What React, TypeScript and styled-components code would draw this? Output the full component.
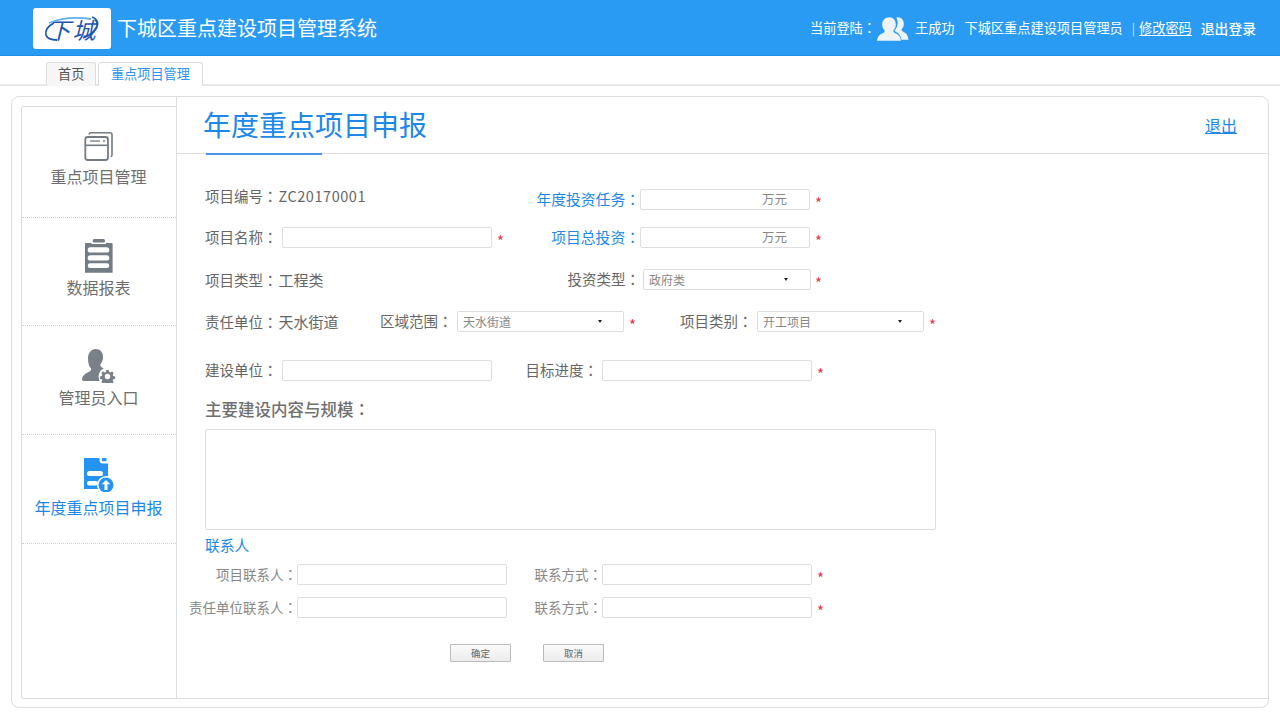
import React from 'react';
import styled, { createGlobalStyle } from 'styled-components';

const Global = createGlobalStyle`
  html, body { margin: 0; padding: 0; background: #fff; }
  body { font-family: "Noto Sans CJK SC", "Liberation Sans", sans-serif; color: #666; overflow: hidden; }
  * { box-sizing: border-box; }
`;

const Page = styled.div`width: 1280px; height: 720px; display: flex; flex-direction: column;`;

const Header = styled.header`
  height: 56px; background: #2a9bf3; border-bottom: 1px solid #1f8fe6;
  display: flex; align-items: center; padding: 0 24px 0 33px; color: #fff; flex: none;
`;
const LogoBox = styled.div`
  position: relative; width: 78px; height: 41px; background: #fff; border-radius: 3px;
  display: flex; align-items: center; justify-content: center; margin-right: 6px; margin-top: 2px; padding: 2px 0 0 1px;
`;
const LogoText = styled.span`
  font-size: 23px; font-style: italic; font-weight: 400; color: #1a56b0; line-height: 1; letter-spacing: 2px;
`;
const LogoSwoosh = styled.svg`position: absolute; left: 0; top: 0;`;
const SystemTitle = styled.h1`margin: 0; font-size: 20px; font-weight: 400; line-height: 28px;`;
const UserBar = styled.div`margin-left: auto; display: flex; align-items: center; font-size: 13.2px; height: 28px;`;
const UserText = styled.span<{ $ml?: number }>`margin-left: ${p => p.$ml ?? 0}px; white-space: nowrap;`;
const UserGlyph = styled.svg`display: block; margin: 1px 0 0 1px; flex: none;`;
const UserLink = styled.a`margin-left: 4px; color: #fff; text-decoration: underline; text-underline-offset: 2px;`;
const Logout = styled.a`margin-left: 9px; color: #fff; font-size: 13.8px; font-weight: 500;`;
const Sep = styled.span`margin-left: 9px; opacity: .8; font-size: 12px;`;
const Colon = styled.span`font-family: "Noto Sans CJK TC", sans-serif;`;

const TabBar = styled.nav`
  height: 30px; flex: none; border-bottom: 2px solid #e9e9e9; padding: 6px 0 0 46px;
  display: flex; align-items: flex-start; gap: 2px;
`;
const Tab = styled.div<{ $active?: boolean }>`
  height: 24px; padding: 0 ${p => (p.$active ? 11.5 : 11)}px; font-size: 13.2px; line-height: 22px;
  border: 1px solid #ddd; border-bottom: 0; border-radius: 3px 3px 0 0; position: relative; z-index: 1;
  color: ${p => (p.$active ? '#2a95ee' : '#555')};
  background: ${p => (p.$active ? '#fff' : '#f6f6f6')};
`;

const Panel = styled.main`
  margin: 10px 0 0 11px; width: 1258px; height: 612px; flex: none;
  border: 1px solid #dedede; border-radius: 8px; padding: 9px 0 8px 9px; display: flex;
`;
const Sidebar = styled.aside`
  width: 156px; flex: none; border: 1px solid #dcdcdc; border-radius: 2px; margin-right: -1px;
`;
const MenuItem = styled.div<{ $h: number; $pt: number; $gap: number; $active?: boolean }>`
  height: ${p => p.$h}px; padding: ${p => p.$pt}px 1px 0 0; border-bottom: 1px dotted #d2d2d2;
  display: flex; flex-direction: column; align-items: center; gap: ${p => p.$gap}px;
  font-size: 16px; line-height: 24px; color: ${p => (p.$active ? '#1c88e8' : '#6e6e6e')};
`;
const MenuIcon = styled.svg`width: 50px; height: 34px; display: block; flex: none; margin-right: -1px;`;

const Content = styled.section`flex: 1; min-width: 0; margin-top: -9px; border-bottom: 1px solid #ddd; border-left: 1px solid #ddd; display: flex; flex-direction: column;`;
const TitleBar = styled.div`
  position: relative; height: 57px; flex: none; border-bottom: 1px solid #ddd;
  display: flex; align-items: center; justify-content: space-between; padding: 0 31px 3px 26px;
  &::after { content: ''; position: absolute; left: 29px; bottom: -2px; width: 116px; height: 2px; background: #4a94f0; }
`;
const PageTitle = styled.h2`margin: 0; font-size: 28px; font-weight: 400; color: #1c88e8; line-height: 40px;`;
const Exit = styled.a`font-size: 16px; color: #1c88e8; text-decoration: underline; margin-top: 3px;`;

const Form = styled.form`padding: 26px 0 0 28px;`;
const Row = styled.div<{ $h: number }>`height: ${p => p.$h}px; display: flex; align-items: center; font-size: 14.5px; color: #666;`;
const Label = styled.label<{ $w?: number; $blue?: boolean; $right?: boolean; $small?: boolean; $pr?: number }>`
  flex: none; white-space: nowrap; width: ${p => (p.$w ? `${p.$w}px` : 'auto')};
  text-align: ${p => (p.$right ? 'right' : 'left')}; padding-right: ${p => p.$pr ?? 0}px; margin-top: -2px;
  color: ${p => (p.$blue ? '#1c88e8' : p.$small ? '#888' : '#666')};
  font-size: ${p => (p.$blue ? 14.8 : p.$small ? 13.5 : 14.5)}px;
`;
const Static = styled.div<{ $w: number; $up?: number }>`flex: none; width: ${p => p.$w}px; white-space: nowrap; margin-top: ${p => -(p.$up ?? 0)}px;`;
const Value = styled.span`font-size: 15px; margin-left: 1px;`;
const Code = styled.span`letter-spacing: .55px; margin-left: 1px;`;
const TextInput = styled.input<{ $w: number; $ml?: number }>`
  flex: none; width: ${p => p.$w}px; height: 21px; margin-left: ${p => p.$ml ?? 0}px; padding: 0 5px;
  border: 1px solid #ddd; border-radius: 2px; background: #fff; outline: 0;
`;
const MoneyBox = styled.div`
  flex: none; width: 170px; height: 21px; border: 1px solid #ddd; border-radius: 2px; background: #fff;
  display: flex; align-items: center; justify-content: flex-end; padding: 0 22px 2px 0; font-size: 12.5px; color: #888;
`;
const SelectBox = styled.div<{ $ml?: number; $w?: number }>`
  flex: none; width: ${p => p.$w ?? 168}px; height: 21px; margin-left: ${p => p.$ml ?? 0}px;
  padding: 0 ${p => (p.$w ?? 168) - 146}px 0 5px;
  border: 1px solid #ddd; border-radius: 2px; background: #fff; font-size: 12px; color: #888;
  display: flex; align-items: center; justify-content: space-between;
  &::after { content: ''; width: 0; height: 0; border: 2px solid transparent; border-top: 3px solid #222; border-bottom: 0; }
`;
const Star = styled.span<{ $ml?: number; $w?: number }>`
  flex: none; color: #f0324b; font-size: 15px; margin: 6px 0 0 ${p => p.$ml ?? 5}px; width: ${p => (p.$w ? `${p.$w}px` : 'auto')};
`;
const SectionTitle = styled.h3`margin: 0 0 12px; font-size: 16.5px; font-weight: 500; color: #707070; line-height: 16px;`;
const Area = styled.textarea`display: block; width: 731px; height: 101px; border: 1px solid #ddd; border-radius: 2px; background: #fff; resize: none; outline: 0;`;
const ContactTitle = styled.div`margin-top: 3px; height: 25px; font-size: 14.8px; line-height: 23px; color: #1c88e8;`;
const ContactRows = styled.div`margin-left: -16px;`;
const Buttons = styled.div`display: flex; gap: 32px; margin: 20px 0 0 245px;`;
const Btn = styled.button`
  width: 61px; height: 18px; padding: 0; border: 1px solid #bbb; border-radius: 1px;
  background: linear-gradient(#fafafa, #ececec); font: 9.5px "Noto Sans CJK SC", sans-serif; color: #666;
`;

const C = () => <Colon>：</Colon>;

const WindowIcon = () => (
  <MenuIcon viewBox="0 0 50 34" fill="none" stroke="#737b84">
    <rect x="11.300" y="7" width="22.700" height="23" rx="2.500" strokeWidth="1.800" />
    <path d="M11.300 15.300h22.700" strokeWidth="1.600" />
    <path d="M16 11h10" strokeWidth="1.300" />
    <circle cx="30" cy="11" r="1" fill="#737b84" stroke="none" />
    <path d="M15 4.500c.2-1 1-1.700 2-1.700h19c1.200 0 2 .8 2 2v20c0 1-.5 1.600-1.300 1.900" strokeWidth="1.600" />
  </MenuIcon>
);
const ClipIcon = () => (
  <MenuIcon viewBox="0 0 50 34" fill="#737b84">
    <rect x="18.700" y="0" width="12.300" height="3.500" rx="1.500" />
    <path d="M12 4h5.500v1h14.500V4h5.600c.5 0 1 .5 1 1v28.700H11V5c0-.5.5-1 1-1z" />
    <g fill="#fff">
      <rect x="13.700" y="8.300" width="21.600" height="5.300" rx="2.600" />
      <rect x="13.700" y="16.300" width="21.600" height="5.300" rx="2.600" />
      <rect x="13.700" y="24.300" width="21.600" height="4.800" rx="2.400" />
    </g>
  </MenuIcon>
);
const AdminIcon = () => (
  <MenuIcon viewBox="0 0 50 34" fill="#7a8087">
    <path d="M21.500 0c5 0 7.500 3.500 7.500 8 0 3-1 5.500-2.500 7.200-.5 1 0 2.500 1.500 3.300l2 1c-3 1.500-4.500 5-4 9.500 0 1 .3 2 .7 3H9.500c-1 0-1.800-1-1.500-2.200 .6-3.300 3-5 7-7 1.500-.8 2.500-2 2-3.600C15 17.500 14 14.500 14 9c0-5 3.500-9 7.500-9z" />
    <circle cx="33.500" cy="27.500" r="9" fill="#fff" />
    <g transform="translate(33.500 27.500)">
      <path d="M-1.200-6.500h2.400l.4 1.800 1.300.6 1.600-1 1.700 1.700-1 1.600.6 1.300 1.800.4v2.400l-1.800.4-.6 1.300 1 1.600-1.700 1.700-1.600-1-1.300.6-.4 1.800h-2.400l-.4-1.800-1.300-.6-1.600 1-1.700-1.700 1-1.600-.6-1.300-1.800-.4v-2.400l1.800-.4.6-1.300-1-1.600 1.700-1.700 1.600 1 1.300-.6z" />
      <circle r="2.700" fill="#fff" />
    </g>
  </MenuIcon>
);
const ReportIcon = () => (
  <MenuIcon viewBox="0 0 50 34" fill="#2593f2">
    <path d="M10 0h15.500v2c0 2 1 3.500 3 3.500H34V31H10z" />
    <rect x="28" y="0" width="4.500" height="3.200" rx=".6" />
    <g fill="#fff">
      <rect x="13" y="13" width="16" height="5" rx="2.500" />
      <rect x="13" y="23" width="11" height="4.500" rx="2.200" />
    </g>
    <circle cx="32" cy="27" r="9" fill="#fff" />
    <circle cx="32" cy="27" r="7.500" />
    <path d="M32 22l4.300 4.300h-2.800V32h-3v-5.700h-2.800z" fill="#fff" />
  </MenuIcon>
);
const UsersIcon = () => (
  <UserGlyph width="32" height="25" viewBox="0 0 34 26" fill="#eef3f6">
    <path d="M22 1c4 0 6.500 3 6.500 7 0 2.500-1 4.500-2.500 6 0 1 .5 1.800 2 2.500 3 1.300 5 4 5.500 8.500H26c-.5-4.500-3-7-6-8.500-1-.5-1.500-1.200-1-2 2-2 3-4.500 3-7.500 0-2-.5-4-1.500-5.500.5-.3 1-.5 1.500-.5z" />
    <path d="M13 1c4 0 7 3 7 7.500 0 2.800-1 5-2.500 6.300-.5 1.500.5 2.500 2 3.200 3.500 1.500 5.500 3.500 6 8H0c.5-4.500 2.500-6.500 6-8 1.500-.7 2.500-1.700 2-3.200C6.500 13.500 5.500 11.300 5.500 8.500 5.500 4 9 1 13 1z" />
  </UserGlyph>
);

export default function App() {
  return (
    <Page>
      <Global />
      <Header>
        <LogoBox>
          <LogoSwoosh width="78" height="41" viewBox="0 0 78 41" fill="none">
            <path d="M21 15c-6 3-9 7-8 12 1 3 5 5 11 5" stroke="#1b55a8" strokeWidth="1.800" />
            <path d="M16 15c12-5 28-6 42-4" stroke="#5fb0ec" strokeWidth="1.800" />
            <path d="M59 9c6 2 7 8 3 13-3 4-7 6-12 8" stroke="#1b55a8" strokeWidth="1.800" />
          </LogoSwoosh>
          <LogoText>下城</LogoText>
        </LogoBox>
        <SystemTitle>下城区重点建设项目管理系统</SystemTitle>
        <UserBar>
          <UserText>当前登陆<C /></UserText>
          <UsersIcon />
          <UserText $ml={6}>王成功</UserText>
          <UserText $ml={10}>下城区重点建设项目管理员</UserText>
          <Sep>|</Sep>
          <UserLink>修改密码</UserLink>
          <Logout>退出登录</Logout>
        </UserBar>
      </Header>
      <TabBar>
        <Tab>首页</Tab>
        <Tab $active>重点项目管理</Tab>
      </TabBar>
      <Panel>
        <Sidebar>
          <MenuItem $h={111} $pt={23} $gap={0}><WindowIcon />重点项目管理</MenuItem>
          <MenuItem $h={108} $pt={21} $gap={2}><ClipIcon />数据报表</MenuItem>
          <MenuItem $h={109} $pt={23} $gap={2}><AdminIcon />管理员入口</MenuItem>
          <MenuItem $h={109} $pt={23} $gap={3} $active><ReportIcon />年度重点项目申报</MenuItem>
        </Sidebar>
        <Content>
          <TitleBar>
            <PageTitle>年度重点项目申报</PageTitle>
            <Exit>退出</Exit>
          </TitleBar>
          <Form>
            <Row $h={38}>
              <Static $w={331} $up={8}>项目编号<C /><Code>ZC20170001</Code></Static>
              <Label $w={104} $blue $right>年度投资任务<C /></Label>
              <MoneyBox>万元</MoneyBox>
              <Star>*</Star>
            </Row>
            <Row $h={38}>
              <Label $w={77}>项目名称<C /></Label>
              <TextInput $w={210} />
              <Star $w={11}>*</Star>
              <Label $w={132} $blue $right>项目总投资<C /></Label>
              <MoneyBox>万元</MoneyBox>
              <Star>*</Star>
            </Row>
            <Row $h={47}>
              <Static $w={332}>项目类型<C /><Value>工程类</Value></Static>
              <Label $w={103} $right>投资类型<C /></Label>
              <SelectBox $ml={3}>政府类</SelectBox>
              <Star $ml={4}>*</Star>
            </Row>
            <Row $h={37}>
              <Static $w={175}>责任单位<C /><Value>天水街道</Value></Static>
              <Label $w={77}>区域范围<C /></Label>
              <SelectBox $w={167}>天水街道</SelectBox>
              <Star $w={51}>*</Star>
              <Label $w={77}>项目类别<C /></Label>
              <SelectBox $w={167}>开工项目</SelectBox>
              <Star>*</Star>
            </Row>
            <Row $h={61}>
              <Label $w={77}>建设单位<C /></Label>
              <TextInput $w={210} />
              <Label $w={110} $right $pr={4}>目标进度<C /></Label>
              <TextInput $w={210} />
              <Star>*</Star>
            </Row>
            <SectionTitle>主要建设内容与规模<C /></SectionTitle>
            <Area />
            <ContactTitle>联系人</ContactTitle>
            <ContactRows>
              <Row $h={33}>
                <Label $w={108} $right $small>项目联系人<C /></Label>
                <TextInput $w={210} />
                <Label $w={95} $right $small>联系方式<C /></Label>
                <TextInput $w={210} />
                <Star>*</Star>
              </Row>
              <Row $h={33}>
                <Label $w={108} $right $small>责任单位联系人<C /></Label>
                <TextInput $w={210} />
                <Label $w={95} $right $small>联系方式<C /></Label>
                <TextInput $w={210} />
                <Star>*</Star>
              </Row>
            </ContactRows>
            <Buttons>
              <Btn type="button">确定</Btn>
              <Btn type="button">取消</Btn>
            </Buttons>
          </Form>
        </Content>
      </Panel>
    </Page>
  );
}
